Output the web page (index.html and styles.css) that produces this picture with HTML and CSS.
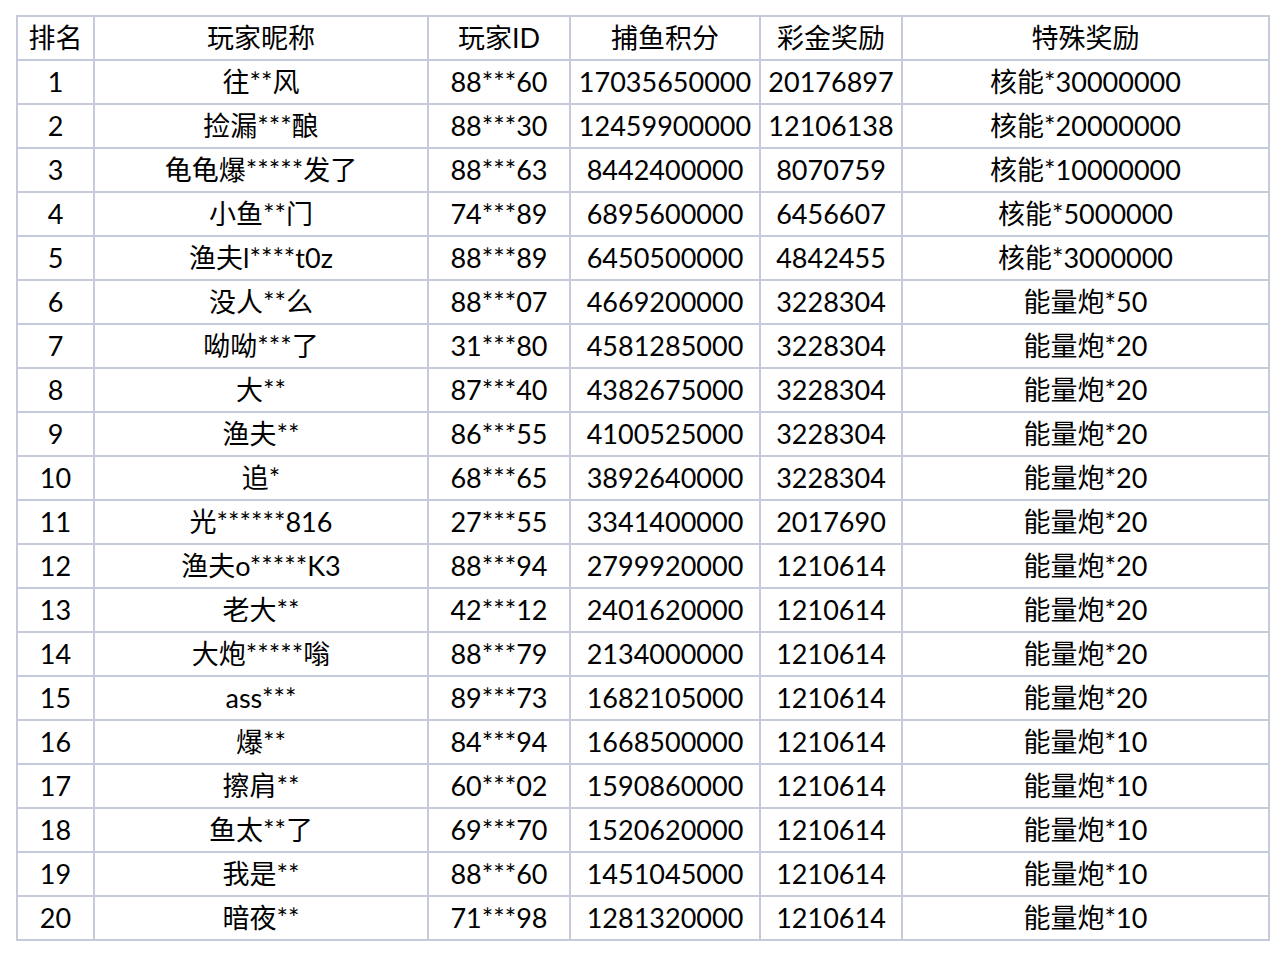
FILE: index.html
```html
<!DOCTYPE html>
<html lang="zh">
<head>
<meta charset="utf-8">
<title>排行榜</title>
<link rel="stylesheet" href="styles.css">
</head>
<body>
<table class="rank">
<colgroup>
<col class="c1"><col class="c2"><col class="c3"><col class="c4"><col class="c5"><col class="c6">
</colgroup>
<thead>
<tr><th>排名</th><th>玩家昵称</th><th>玩家ID</th><th>捕鱼积分</th><th>彩金奖励</th><th>特殊奖励</th></tr>
</thead>
<tbody>
<tr><td>1</td><td>往**风</td><td>88***60</td><td>17035650000</td><td>20176897</td><td>核能*30000000</td></tr>
<tr><td>2</td><td>捡漏***酿</td><td>88***30</td><td>12459900000</td><td>12106138</td><td>核能*20000000</td></tr>
<tr><td>3</td><td>龟龟爆*****发了</td><td>88***63</td><td>8442400000</td><td>8070759</td><td>核能*10000000</td></tr>
<tr><td>4</td><td>小鱼**门</td><td>74***89</td><td>6895600000</td><td>6456607</td><td>核能*5000000</td></tr>
<tr><td>5</td><td>渔夫l****t0z</td><td>88***89</td><td>6450500000</td><td>4842455</td><td>核能*3000000</td></tr>
<tr><td>6</td><td>没人**么</td><td>88***07</td><td>4669200000</td><td>3228304</td><td>能量炮*50</td></tr>
<tr><td>7</td><td>呦呦***了</td><td>31***80</td><td>4581285000</td><td>3228304</td><td>能量炮*20</td></tr>
<tr><td>8</td><td>大**</td><td>87***40</td><td>4382675000</td><td>3228304</td><td>能量炮*20</td></tr>
<tr><td>9</td><td>渔夫**</td><td>86***55</td><td>4100525000</td><td>3228304</td><td>能量炮*20</td></tr>
<tr><td>10</td><td>追*</td><td>68***65</td><td>3892640000</td><td>3228304</td><td>能量炮*20</td></tr>
<tr><td>11</td><td>光******816</td><td>27***55</td><td>3341400000</td><td>2017690</td><td>能量炮*20</td></tr>
<tr><td>12</td><td>渔夫o*****K3</td><td>88***94</td><td>2799920000</td><td>1210614</td><td>能量炮*20</td></tr>
<tr><td>13</td><td>老大**</td><td>42***12</td><td>2401620000</td><td>1210614</td><td>能量炮*20</td></tr>
<tr><td>14</td><td>大炮*****嗡</td><td>88***79</td><td>2134000000</td><td>1210614</td><td>能量炮*20</td></tr>
<tr><td>15</td><td>ass***</td><td>89***73</td><td>1682105000</td><td>1210614</td><td>能量炮*20</td></tr>
<tr><td>16</td><td>爆**</td><td>84***94</td><td>1668500000</td><td>1210614</td><td>能量炮*10</td></tr>
<tr><td>17</td><td>擦肩**</td><td>60***02</td><td>1590860000</td><td>1210614</td><td>能量炮*10</td></tr>
<tr><td>18</td><td>鱼太**了</td><td>69***70</td><td>1520620000</td><td>1210614</td><td>能量炮*10</td></tr>
<tr><td>19</td><td>我是**</td><td>88***60</td><td>1451045000</td><td>1210614</td><td>能量炮*10</td></tr>
<tr><td>20</td><td>暗夜**</td><td>71***98</td><td>1281320000</td><td>1210614</td><td>能量炮*10</td></tr>
</tbody>
</table>
</body>
</html>
```
FILE: styles.css
```css
html, body {
  margin: 0;
  padding: 0;
  background: #ffffff;
}
body {
  padding: 15px 0 0 16px;
  font-family: "Lato", "Noto Sans CJK SC", sans-serif;
  color: #000000;
}
.rank {
  border-collapse: collapse;
  table-layout: fixed;
  width: 1252px;
  border: 2px solid #c6cbdc;
}
.c1 { width: 77px; }
.c2 { width: 334px; }
.c3 { width: 142px; }
.c4 { width: 190px; }
.c5 { width: 142px; }
.c6 { width: 367px; }
.rank th,
.rank td {
  border: 2px solid #c6cbdc;
  height: 42px;
  padding: 0;
  text-align: center;
  vertical-align: middle;
  font-size: 27px;
  font-weight: normal;
  line-height: 42px;
  white-space: nowrap;
  overflow: hidden;
}
```
